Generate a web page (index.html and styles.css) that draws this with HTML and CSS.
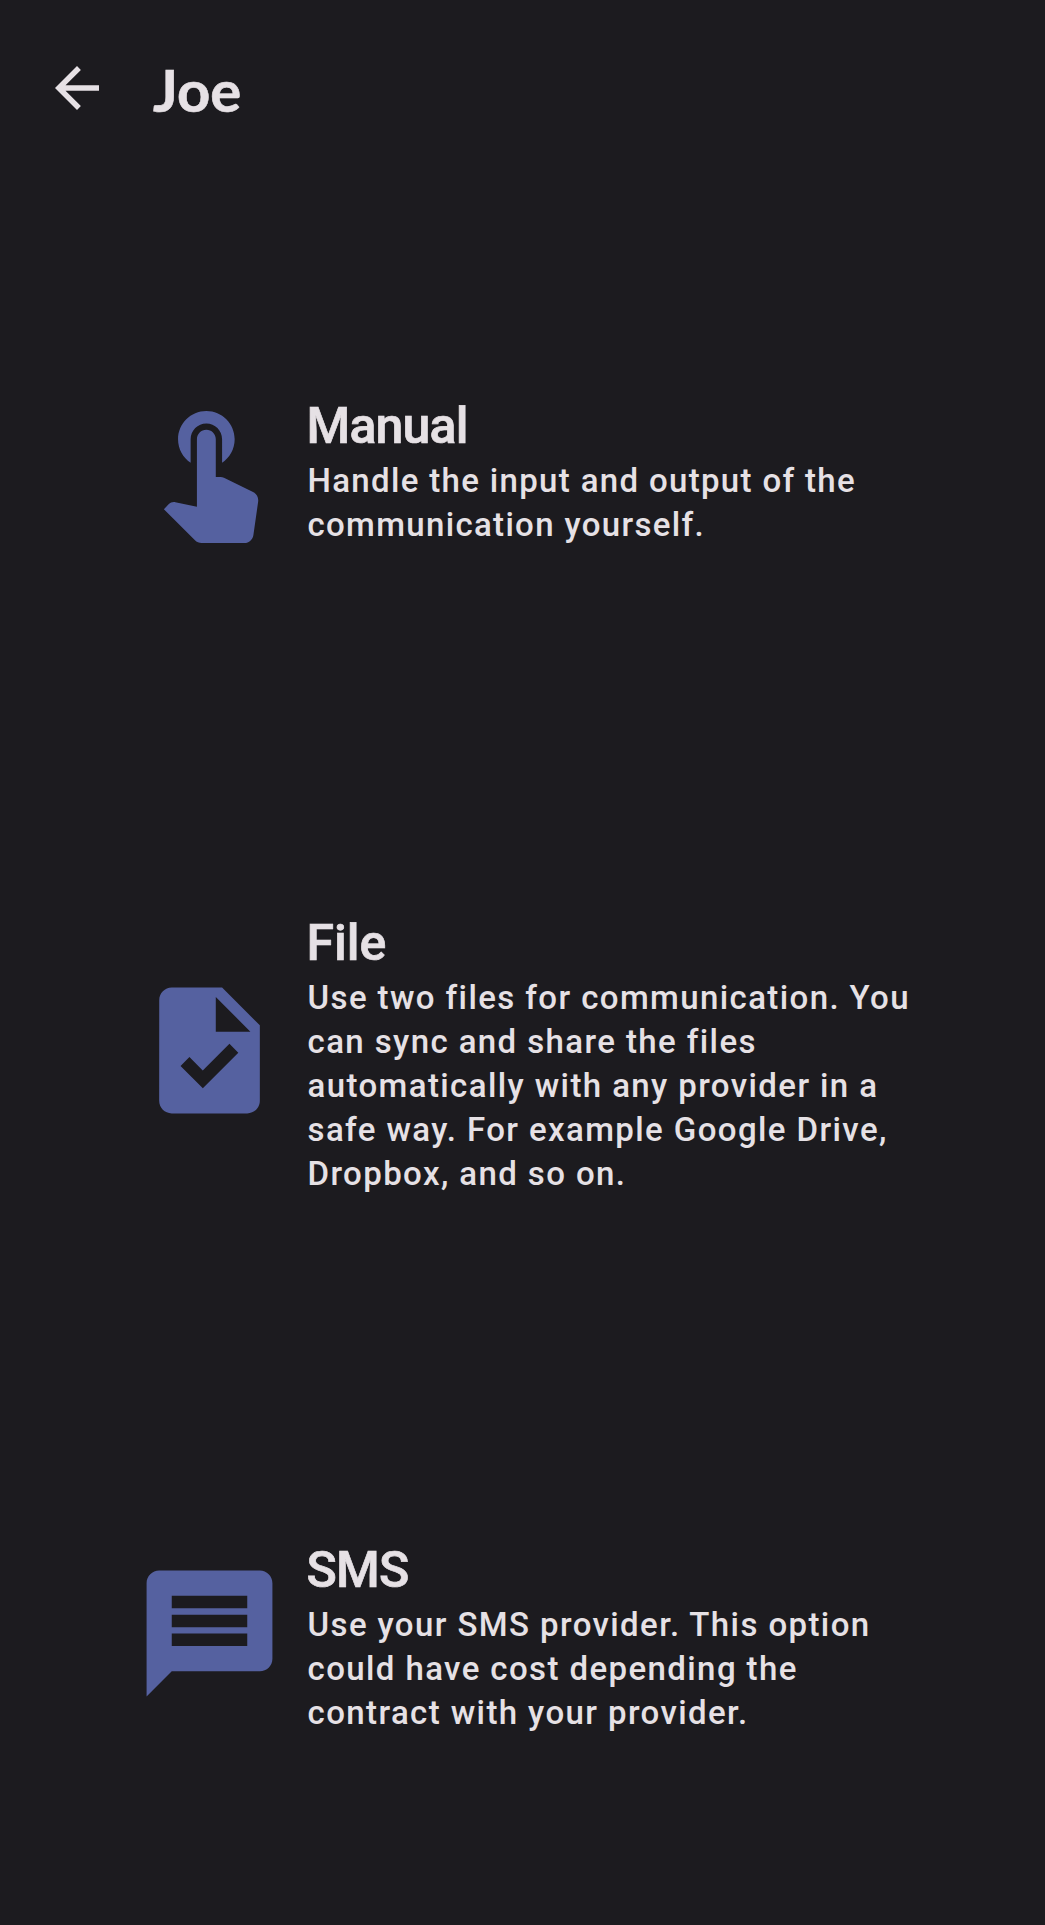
FILE: index.html
```html
<!DOCTYPE html>
<html lang="en">
<head>
<meta charset="utf-8">
<title>Joe</title>
<link rel="stylesheet" href="styles.css">
</head>
<body>
<header class="bar">
  <svg class="back" viewBox="0 0 24 24"><path d="M20 11H7.83l5.59-5.59L12 4l-8 8 8 8 1.41-1.41L7.83 13H20v-2z"/></svg>
  <h1 class="name">Joe</h1>
</header>
<main class="options">
  <section class="option manual">
    <svg class="icon" viewBox="0 0 24 24"><path d="M9 11.24V7.5C9 6.12 10.12 5 11.5 5S14 6.12 14 7.5v3.74c1.21-.81 2-2.18 2-3.74C16 5.01 13.99 3 11.5 3S7 5.01 7 7.5c0 1.56.79 2.93 2 3.74zm9.84 4.63l-4.54-2.26c-.17-.07-.35-.11-.54-.11H13v-6c0-.83-.67-1.5-1.5-1.5S10 6.67 10 7.5v10.74l-3.43-.72c-.08-.01-.15-.03-.24-.03-.31 0-.59.13-.79.33l-.79.8 4.94 4.94c.27.27.65.44 1.06.44h6.79c.75 0 1.33-.55 1.44-1.28l.75-5.27c.01-.07.02-.14.02-.2 0-.62-.38-1.16-.91-1.38z"/></svg>
    <div class="text">
      <h2 class="title">Manual</h2>
      <p class="desc">Handle the input and output of the<br>communication yourself.</p>
    </div>
  </section>
  <section class="option file">
    <svg class="icon" viewBox="0 0 24 24"><path d="M14 2H6c-1.1 0-1.99.9-1.99 2L4 20c0 1.1.89 2 1.99 2H18c1.1 0 2-.9 2-2V8l-6-6zm-3.06 16L7.4 14.46l1.41-1.41 2.12 2.12 4.24-4.24 1.41 1.41L10.94 18zM13 9V3.5L18.5 9H13z"/></svg>
    <div class="text">
      <h2 class="title">File</h2>
      <p class="desc">Use two files for communication. You<br>can sync and share the files<br>automatically with any provider in a<br>safe way. For example Google Drive,<br>Dropbox, and so on.</p>
    </div>
  </section>
  <section class="option sms">
    <svg class="icon" viewBox="0 0 24 24"><path d="M20 2H4c-1.1 0-2 .9-2 2v18l4-4h14c1.1 0 2-.9 2-2V4c0-1.1-.9-2-2-2zm-2 12H6v-2h12v2zm0-3H6V9h12v2zm0-3H6V6h12v2z"/></svg>
    <div class="text">
      <h2 class="title">SMS</h2>
      <p class="desc">Use your SMS provider. This option<br>could have cost depending the<br>contract with your provider.</p>
    </div>
  </section>
</main>
</body>
</html>
```
FILE: styles.css
```css
* { box-sizing: border-box; }
body { margin: 0; height: 1925px; background: #1c1b1f; color: #e6e1e5; font-family: Roboto, sans-serif; }
h1, h2, p { margin: 0; }
svg { display: block; flex: none; }
.bar { display: flex; align-items: center; height: 176px; padding-left: 44px; }
.back { width: 66px; height: 66px; fill: #e6e1e5; }
.name { margin: 4px 0 0 43px; font: 700 58px/70px Lato, sans-serif; -webkit-text-stroke: 0.6px #e6e1e5; }
.option { display: flex; align-items: center; padding-left: 134px; }
.manual { margin-top: 217px; }
.file { margin-top: 363px; }
.sms { margin-top: 341px; }
.icon { width: 151px; height: 151px; margin-top: -5px; fill: #5561a0; }
.text { padding-left: 22.5px; }
.title { margin-left: -1px; font-size: 50px; line-height: 66px; font-weight: 500; letter-spacing: -0.8px; -webkit-text-stroke: 0.7px #e6e1e5; white-space: nowrap; }
.file .title { letter-spacing: 0; }
.desc { font-size: 33px; line-height: 44px; font-weight: 500; letter-spacing: 1.4px; white-space: nowrap; }
.manual .desc { letter-spacing: 1.33px; }
```
